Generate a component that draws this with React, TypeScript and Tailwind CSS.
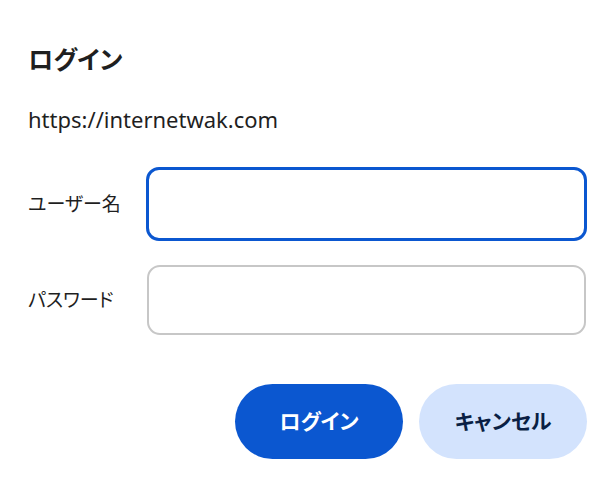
import { useState } from "react";

const jp = "font-['Noto_Sans','Noto_Sans_CJK_JP',sans-serif] [font-feature-settings:'palt']";

const App = () => {
  const [user, setUser] = useState("");
  const [pass, setPass] = useState("");

  return (
    <div className={`w-[616px] h-[492px] bg-white text-[#1f1f1f] pl-[28px] pr-[29px] pt-[41px] ${jp}`}>
      {/* header */}
      <h1 className="text-[25px] font-bold leading-[36px]">ログイン</h1>
      <p className="mt-[28px] text-[22px] leading-[28px] text-[#1f1f1f]">https://internetwak.com</p>

      {/* fields */}
      <div className="mt-[34px] flex flex-col gap-[24px]">
        <label className="flex items-center">
          <span className="w-[118px] text-[19px]">ユーザー名</span>
          <input
            value={user}
            onChange={(e) => setUser(e.target.value)}
            className="flex-1 h-[74px] rounded-[13px] border-[3px] border-[#0b57d0] outline-none px-4 text-[20px]"
          />
        </label>
        <label className="flex items-center">
          <span className="w-[119px] text-[19px]">パスワード</span>
          <input
            type="password"
            value={pass}
            onChange={(e) => setPass(e.target.value)}
            className="flex-1 mr-[1px] h-[70px] rounded-[13px] border-2 border-[#c7c7c7] outline-none px-4 text-[20px]"
          />
        </label>
      </div>

      {/* actions */}
      <div className="mt-[49px] flex justify-end gap-[16px]">
        <button className="w-[168px] h-[75px] rounded-full bg-[#0b57d0] text-white text-[21px] font-bold">
          ログイン
        </button>
        <button className="w-[168px] h-[75px] rounded-full bg-[#d3e3fd] text-[#0a1f44] text-[21px] font-bold">
          キャンセル
        </button>
      </div>
    </div>
  );
};

export default App;
